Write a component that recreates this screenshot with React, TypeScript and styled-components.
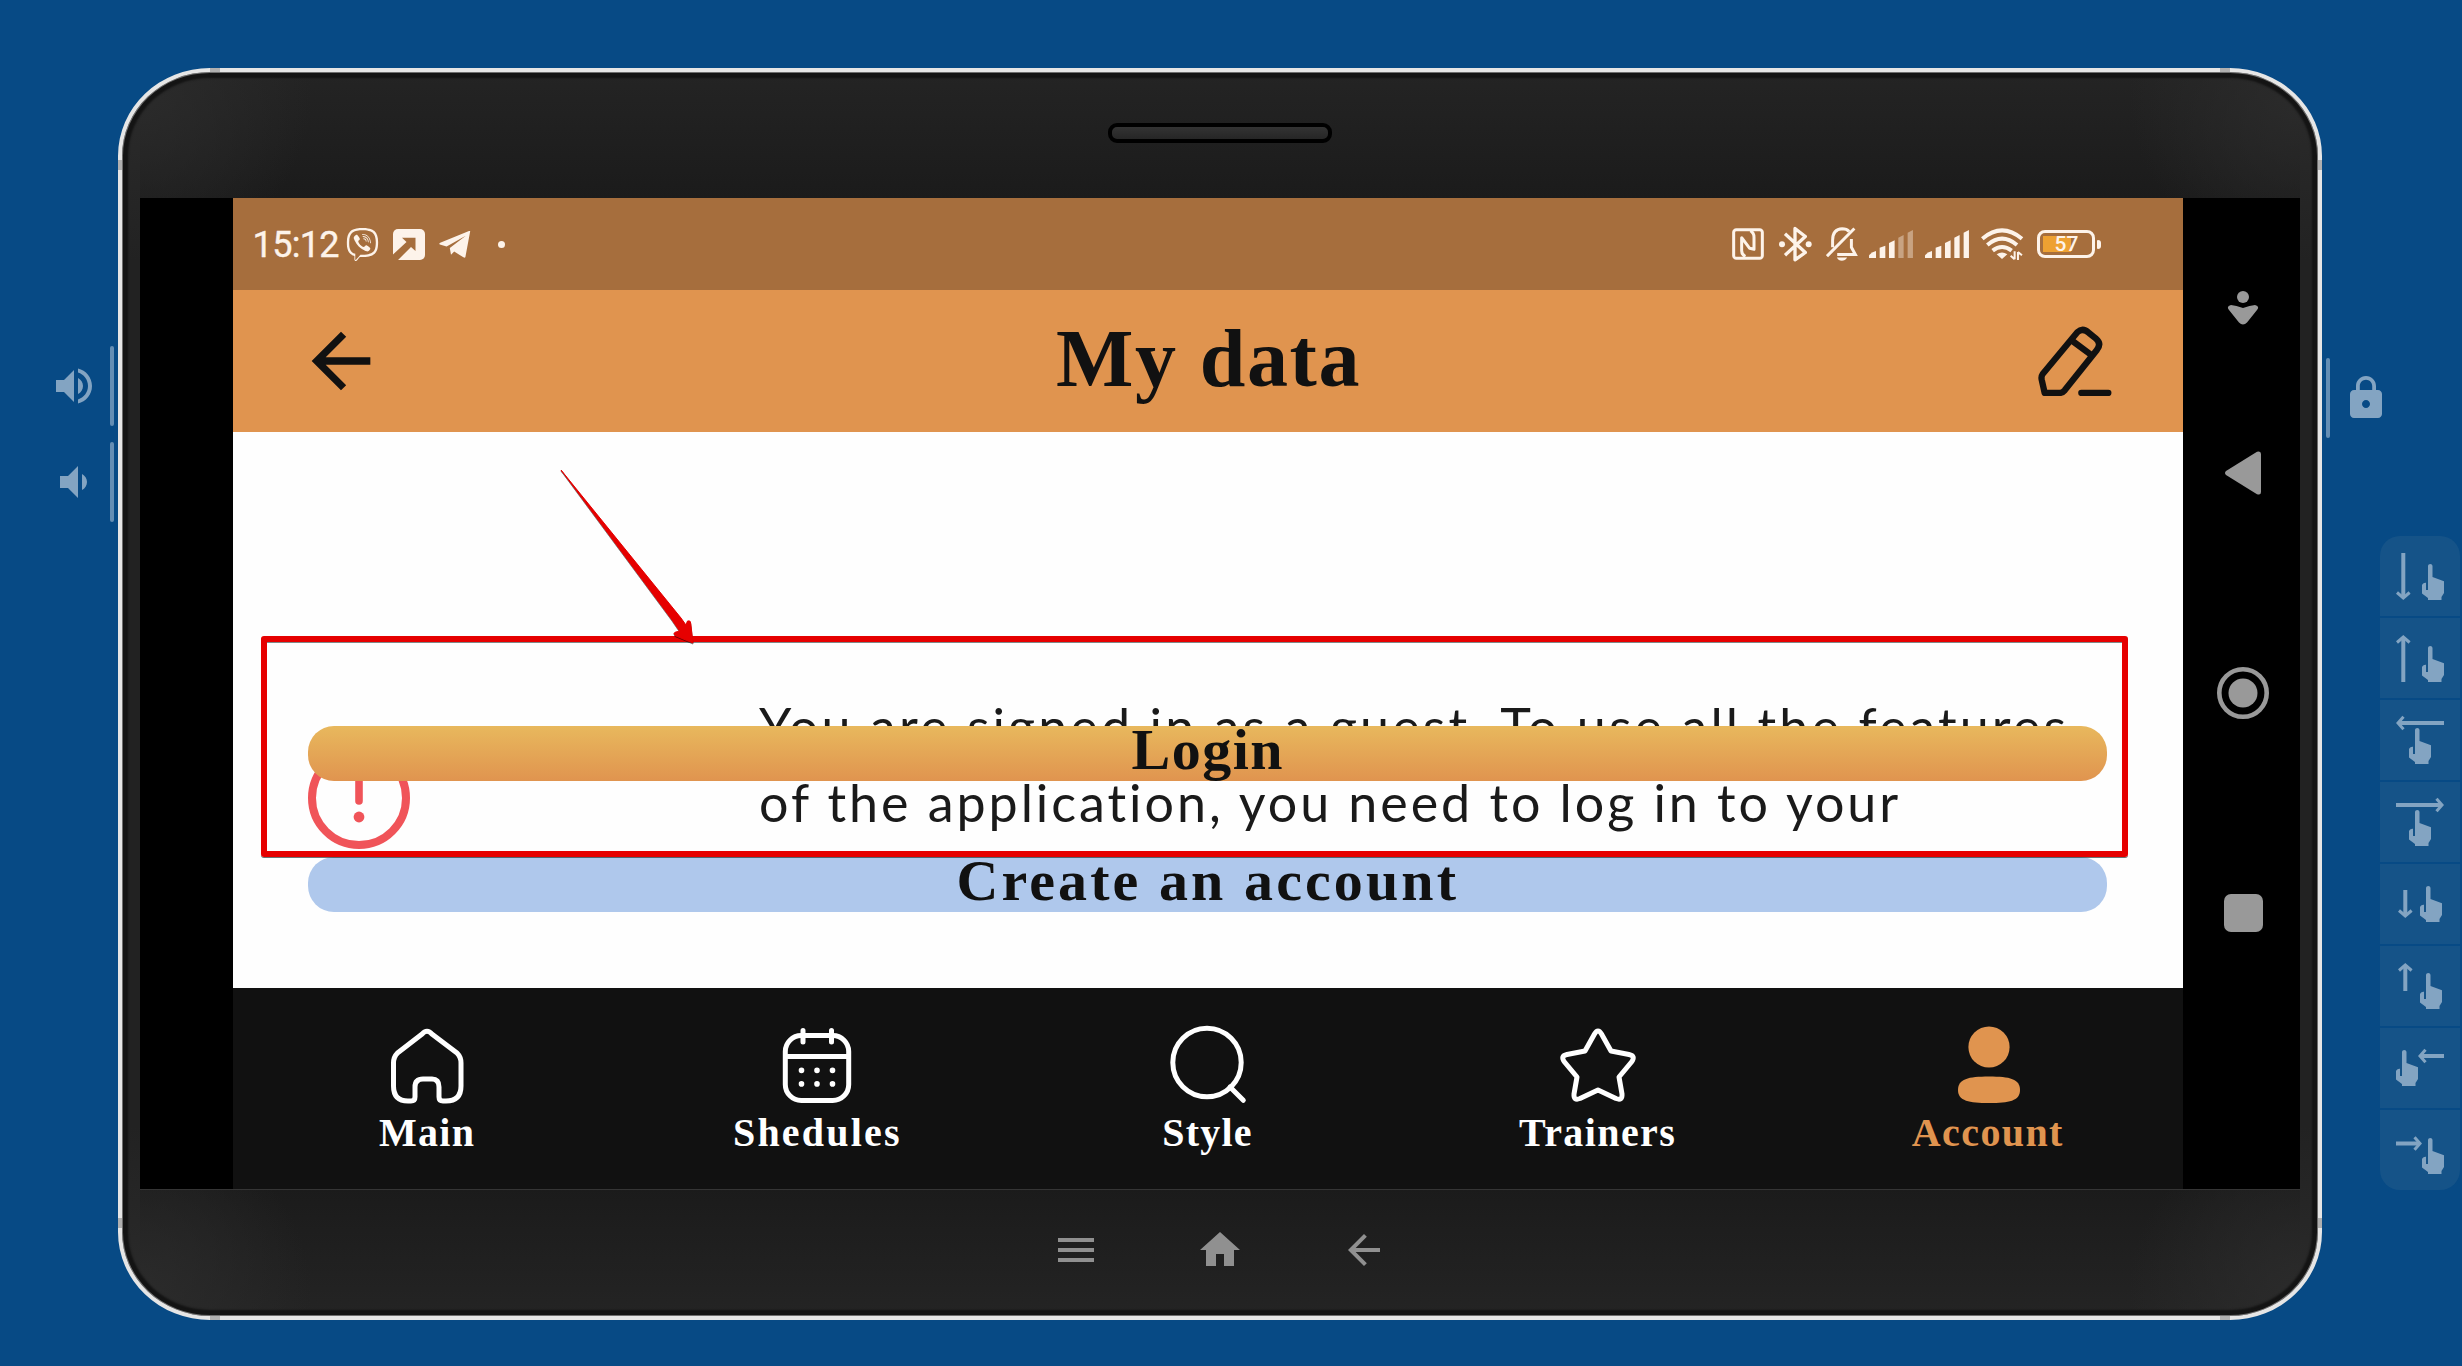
import React from 'react';
import styled, { createGlobalStyle } from 'styled-components';
import { FaViber, FaTelegramPlane } from 'react-icons/fa';

const GlobalStyle = createGlobalStyle`
  * { box-sizing: border-box; }
  body { margin: 0; background: #074a85; overflow: hidden; }
`;

const serif = `"Liberation Serif", "Times New Roman", serif`;

const Stage = styled.main`
  position: relative;
  display: flex;
  width: 2462px;
  height: 1366px;
  background: #074a85;
  overflow: hidden;
`;

const LeftKeys = styled.aside`
  width: 118px;
  padding: 346px 4px 0 50px;
  display: flex;
  flex-direction: column;
  gap: 16px;
`;

const SideKey = styled.div`
  display: flex;
  justify-content: space-between;
  height: 80px;
  svg { display: block; margin-top: 16px; fill: #83a4c2; }
`;

const KeyBar = styled.span`
  width: 4px;
  height: 80px;
  border-radius: 2px;
  background: #648eb4;
`;

const Device = styled.section`
  position: relative;
  width: 2204px;
  height: 1252px;
  margin-top: 68px;
  border: 4px solid #e6e6e6;
  border-radius: 92px / 88px;
  display: flex;
  flex-direction: column;
  align-items: center;
  background:
    radial-gradient(circle at 20px 20px, rgba(44, 44, 44, 0.9), transparent 170px),
    radial-gradient(circle at 2176px 20px, rgba(44, 44, 44, 0.9), transparent 170px),
    radial-gradient(circle at 20px 1224px, rgba(44, 44, 44, 0.9), transparent 170px),
    radial-gradient(circle at 2176px 1224px, rgba(44, 44, 44, 0.9), transparent 170px),
    linear-gradient(90deg, #222 18px, transparent 18px, transparent 2178px, #222 2178px),
    linear-gradient(#242424, #1b1b1b 126px, #1b1b1b 1117px, #242424);
  box-shadow: inset 0 0 0 1px #6e6e6e, inset 0 0 2px 6px #141414;
`;

const Tick = styled.i<{ $x: number; $y: number; $v?: boolean }>`
  position: absolute;
  left: ${(p) => p.$x}px;
  top: ${(p) => p.$y}px;
  width: ${(p) => (p.$v ? 4 : 10)}px;
  height: ${(p) => (p.$v ? 10 : 4)}px;
  background: #b0b0b0;
`;

const Brow = styled.div`
  height: 126px;
  padding-top: 51px;
`;

const Speaker = styled.div`
  width: 224px;
  height: 20px;
  border: 4px solid #000;
  border-radius: 9px;
  background: linear-gradient(#333, #262626);
`;

const Screen = styled.div`
  display: flex;
  width: 2160px;
  height: 992px;
  padding-left: 92.6px;
  background: #000;
  border-bottom: 1px solid #353535;
`;

const AppView = styled.div`
  width: 1950.8px;
  display: flex;
  flex-direction: column;
  background: #fefefe;
`;

const StatusBar = styled.div`
  display: flex;
  height: 91.5px;
  padding: 1px 82px 0 20px;
  align-items: center;
  background: #a66e3d;
  color: #fdf3ea;
  svg { display: block; flex: none; }
`;

const Clock = styled.span`
  width: 93.500px;
  font: 400 36px/40px Roboto, sans-serif;
  letter-spacing: -0.7px;
  -webkit-text-stroke: 0.4px #fdf3ea;
  padding-top: 2px;
`;

const Cluster = styled.div<{ $gap: number }>`
  display: flex;
  align-items: center;
  gap: ${(p) => p.$gap}px;
`;

const Spacer = styled.span`
  flex: 1;
`;

const Dot = styled.i`
  width: 7px;
  height: 7px;
  margin-left: 13px;
  border-radius: 50%;
  background: #fdf3ea;
`;

const NfcIcon = styled.svg`
  margin-right: 3.300px;
`;

const BluetoothIcon = styled.svg`
  margin-right: 2.300px;
`;

const Battery = styled.div`
  display: flex;
  align-items: center;
  margin-left: 2px;
`;

const Cell = styled.div`
  display: flex;
  width: 58px;
  height: 28px;
  border: 3px solid #fdf3ea;
  border-radius: 8px;
  align-items: center;
  justify-content: center;
  background: linear-gradient(90deg, #eea132 28px, transparent 28px) 3px 3px / 46px 16px no-repeat;
  font: 500 21px/22px Roboto, sans-serif;
`;

const BatteryTip = styled.i`
  width: 4px;
  height: 9px;
  margin-left: 2px;
  border-radius: 1px 3px 3px 1px;
  background: #fdf3ea;
`;

const Header = styled.header`
  display: flex;
  justify-content: space-between;
  align-items: center;
  height: 142px;
  padding: 0 71px 0 64px;
  background: #e0944f;
  svg { display: block; fill: #111; }
`;

const Title = styled.h1`
  margin: 0 0 4px -6px;
  font: bold 82px/100px ${serif};
  letter-spacing: 1.6px;
  color: #111;
`;

const Content = styled.section`
  height: 556px;
  padding: 255px 76px 0 75.5px;
  display: flex;
  flex-direction: column;
`;

const Notice = styled.div`
  display: flex;
  height: 152px;
  flex: none;
`;

const AlertIcon = styled.svg`
  flex: none;
  width: 102px;
  height: 102px;
  margin: 60px 349px 0 0;
`;

const Message = styled.p`
  margin: 1px 0 0;
  font: 400 52px/76px Lato, sans-serif;
  color: #1a1a1a;
  white-space: nowrap;
`;

const MessageLine = styled.span<{ $spacing: number }>`
  display: block;
  letter-spacing: ${(p) => p.$spacing}px;
`;

const Actions = styled.div`
  position: relative;
  display: flex;
  flex-direction: column;
  gap: 76.5px;
  margin-top: -112.5px;
`;

const ActionButton = styled.button<{ $fill: string; $spacing: number }>`
  height: 54.7px;
  padding: 0 0 7px;
  border: 0;
  border-radius: 26px;
  background: ${(p) => p.$fill};
  color: #111;
  font: bold 58px/46px ${serif};
  letter-spacing: ${(p) => p.$spacing}px;
`;

const TabBar = styled.nav`
  display: flex;
  flex: 1;
  background: #111;
`;

const Tab = styled.div<{ $active?: boolean; $spacing: number }>`
  flex: 1;
  display: flex;
  flex-direction: column;
  align-items: center;
  gap: 9px;
  padding: 38px 1px 0 0;
  font: bold 40px/40px ${serif};
  letter-spacing: ${(p) => p.$spacing}px;
  color: ${(p) => (p.$active ? '#e0944f' : '#fff')};
  svg { display: block; width: 80px; height: 78px; overflow: visible; }
`;

const SystemNav = styled.div`
  display: flex;
  flex-direction: column;
  align-items: center;
  flex: 1;
  padding: 92px 0 0 3px;
  svg { display: block; fill: #999; }
`;

const NavGlyph = styled.svg<{ $top: number }>`
  margin-top: ${(p) => p.$top}px;
`;

const Chin = styled.div`
  display: flex;
  gap: 96px;
  padding-top: 36px;
  svg { display: block; fill: #909090; }
`;

const RightKeys = styled.aside`
  display: flex;
  flex-direction: column;
  align-items: flex-start;
  width: 140px;
  padding: 358px 0 0 4px;
`;

const LockKey = styled(SideKey)`
  gap: 12px;
`;

const Gestures = styled.div`
  display: flex;
  flex-direction: column;
  gap: 2px;
  margin: 98px 0 0 54px;
  border-radius: 20px;
  overflow: hidden;
`;

const Gesture = styled.svg`
  display: block;
  width: 80px;
  height: 80px;
  background: #155388;
  fill: #83a4c2;
`;

const Highlight = styled.div`
  position: absolute;
  left: 261px;
  top: 636px;
  width: 1867px;
  height: 221px;
  border: 6px solid #e60000;
  border-radius: 3px;
  box-shadow: 0 1px 0 rgba(40, 60, 60, 0.7), inset 0 1px 0 rgba(40, 60, 60, 0.6);
`;

const Pointer = styled.svg`
  position: absolute;
  left: 556px;
  top: 466px;
  width: 144px;
  height: 184px;
  filter: drop-shadow(0 1px 0 rgba(0, 0, 0, 0.5));
`;

const BACK = 'M20 11H7.83l5.59-5.59L12 4l-8 8 8 8 1.41-1.41L7.83 13H20v-2z';

const Material = ({ d, size = 48 }: { d: string; size?: number }) => (
  <svg width={size} height={size} viewBox="0 0 24 24"><path d={d} /></svg>
);

const HAND =
  'M6 2.3C6-.7 10.5-.7 10.5 2.3V13L22 17.2V29L19.5 33V36H6V34L0 29.5V21C1 19 3 18.4 4 18.8V26H6Z';

type GestureSpec = { hand: [number, number]; from: [number, number]; to: [number, number] };

const gestures: GestureSpec[] = [
  { hand: [42, 28], from: [23.3, 17], to: [23.3, 64] },
  { hand: [42, 28], from: [23.3, 64], to: [23.3, 17] },
  { hand: [29, 28], from: [64, 23], to: [16, 23] },
  { hand: [29, 28], from: [16, 23], to: [64, 23] },
  { hand: [40, 22], from: [25.3, 26], to: [25.3, 54] },
  { hand: [40, 27], from: [25.3, 45], to: [25.3, 17] },
  { hand: [16, 22], from: [64, 28], to: [38, 28] },
  { hand: [42, 28], from: [16, 33.5], to: [42, 33.5] },
];

const GestureIcon = ({ hand, from, to }: GestureSpec) => {
  const length = Math.hypot(to[0] - from[0], to[1] - from[1]);
  const angle = (Math.atan2(to[1] - from[1], to[0] - from[0]) * 180) / Math.PI;
  return (
    <Gesture viewBox="0 0 80 80">
      <path d={HAND} transform={`translate(${hand[0]} ${hand[1]})`} />
      <g transform={`translate(${from[0]} ${from[1]}) rotate(${angle})`} fill="none" stroke="#83a4c2">
        <path d={`M0 0H${length - 2}`} strokeWidth="4" />
        <path d={`M${length - 7.5} -6.3L${length - 2} 0L${length - 7.5} 6.3`} strokeWidth="3" />
      </g>
    </Gesture>
  );
};

const signalBars = [
  'M0 85V76Q8 66 21 63V85Z',
  'M32 85V53L49 47V85Z',
  'M60 85V39L77 31V85Z',
  'M88 85V23L104 15V85Z',
  'M116 85V8L132 0V85Z',
];

const Signal = ({ level }: { level: number }) => (
  <svg width="44.3" height="28.3" viewBox="0 0 133 85">
    {signalBars.map((d, i) => (
      <path key={d} d={d} fill="#fdf3ea" opacity={i < level ? 1 : 0.4} />
    ))}
  </svg>
);

const tabs = [
  {
    label: 'Main',
    spacing: 1.3,
    icon: (
      <path
        d="M34.8 8.3Q40 2.2 45.2 8.3L70 27Q74 31 74 37V60Q74 75 59 75H56Q52 75 52 71V61Q52 53 45 53H36Q28 53 28 61V71Q28 75 24 75H21Q6.5 75 6.5 60V37Q6.5 31 10.5 27Z"
        fill="none" stroke="#fff" strokeWidth="5" strokeLinejoin="round"
      />
    ),
  },
  {
    label: 'Shedules',
    spacing: 2.2,
    icon: (
      <g fill="none" stroke="#fff" strokeWidth="5" strokeLinecap="round">
        <rect x="8.3" y="9.5" width="63.4" height="65" rx="16" />
        <path d="M9 30.5H71M26 4.5V16M54.5 4.5V16" />
        <path d="M24.5 44.3v.2M40 44.3v.2M55.5 44.3v.2M24.5 57.7v.2M40 57.7v.2M55.5 57.7v.2" strokeWidth="5.6" />
      </g>
    ),
  },
  {
    label: 'Style',
    spacing: 1.2,
    icon: (
      <g fill="none" stroke="#fff" strokeWidth="5" strokeLinecap="round">
        <circle cx="40" cy="36.5" r="34.2" />
        <path d="M63 61L76.3 74.3" />
      </g>
    ),
  },
  {
    label: 'Trainers',
    spacing: 1.4,
    icon: (
      <path
        d="M36.5 8Q40 2 43.5 8L53 25L71 28.5Q78 30 73.5 36L61 51L64 68Q64.5 75 58 72.5L40 64L22 72.5Q15.5 75 16 68L19 51L6.500 36Q2 30 9 28.5L27 25Z"
        fill="none" stroke="#fff" strokeWidth="5" strokeLinejoin="round"
      />
    ),
  },
  {
    label: 'Account',
    spacing: 1.4,
    active: true,
    icon: (
      <g fill="#e0944f">
        <circle cx="41" cy="21" r="20.6" />
        <path d="M10 64C10 53 20 50.5 41 50.5S72 53 72 64S61 77 41 77S10 75 10 64Z" />
      </g>
    ),
  },
];

export default function App() {
  return (
    <Stage>
      <GlobalStyle />
      <LeftKeys>
        <SideKey>
          <Material d="M3 9v6h4l5 5V4L7 9H3zm13.5 3c0-1.77-1.02-3.29-2.5-4.03v8.05c1.48-.73 2.5-2.25 2.5-4.02zM14 3.23v2.06c2.89.86 5 3.54 5 6.71s-2.11 5.85-5 6.71v2.06c4.01-.91 7-4.49 7-8.77s-2.99-7.86-7-8.77z" />
          <KeyBar />
        </SideKey>
        <SideKey>
          <Material d="M18.5 12c0-1.77-1.02-3.29-2.5-4.03v8.05c1.48-.73 2.5-2.25 2.5-4.02zM5 9v6h4l5 5V4L9 9H5z" />
          <KeyBar />
        </SideKey>
      </LeftKeys>

      <Device>
        <Tick $x={88} $y={-4} />
        <Tick $x={2098} $y={-4} />
        <Tick $x={88} $y={1244} />
        <Tick $x={2098} $y={1244} />
        <Tick $v $x={-4} $y={88} />
        <Tick $v $x={2196} $y={88} />
        <Tick $v $x={-4} $y={1146} />
        <Tick $v $x={2196} $y={1146} />
        <Brow><Speaker /></Brow>
        <Screen>
          <AppView>
            <StatusBar>
              <Clock>15:12</Clock>
              <Cluster $gap={14}>
                <FaViber size={33} />
                <svg width="32" height="31" viewBox="0 0 32 31">
                  <rect width="32" height="31" rx="5" fill="#fdf3ea" />
                  <path d="M9 8.7H22.5V22L18 18 5 31H0V25.5L13.5 13Z" fill="#a66e3d" />
                </svg>
                <svg width="32" height="27" viewBox="0 0 80 80" preserveAspectRatio="none">
                  <path d="M78 1L66 77Q65 81 61 78L38 61L30 70L27 50L67 14L19 46L2 40Q-1 38 3 35L75 0Q78-1 78 1Z" fill="#fdf3ea" />
                </svg>
                <Dot />
              </Cluster>
              <Spacer />
              <Cluster $gap={11.7}>
                <NfcIcon width="32" height="32" viewBox="153 144 96 96" fill="none" stroke="#fdf3ea" strokeWidth="9">
                  <rect x="158" y="149" width="86" height="86" rx="8" />
                  <path d="M193 230Q182 224 182 212V173L206 205L219 208V172Q219 158 208 152" strokeWidth="9" strokeLinejoin="round" />
                </NfcIcon>
                <BluetoothIcon width="33" height="36" viewBox="293 137 99 107" fill="none" stroke="#fdf3ea" strokeWidth="10">
                  <path d="M311 160L372 216L341 238V144L372 168L311 224" strokeLinejoin="round" />
                  <circle cx="302" cy="191" r="9" fill="#fdf3ea" stroke="none" />
                  <circle cx="382" cy="191" r="9" fill="#fdf3ea" stroke="none" />
                </BluetoothIcon>
                <svg width="32" height="34" viewBox="434 142 97 102" fill="none" stroke="#fdf3ea" strokeWidth="9">
                  <path d="M437 230L520 146M454 203V182Q454 148 483 147Q497 147 504 155M468 225H523L511 203V178" />
                  <path d="M467 234H498Q492 244 482 244T467 234Z" fill="#fdf3ea" stroke="none" />
                </svg>
                <Signal level={3} />
                <Signal level={5} />
                <svg width="42.3" height="32" viewBox="903 146 127 96" fill="none" stroke="#fdf3ea" strokeWidth="12">
                  <path d="M907 178Q966 128 1026 178M922 197Q966 159 1011 197M938 214Q966 192 995 214" />
                  <path d="M950 225Q966 214 982 225L966 239Z" fill="#fdf3ea" stroke="none" />
                  <path d="M1004 216V240M1004 240L992 229M1014 242V218M1014 218L1026 228" strokeWidth="6" />
                </svg>
                <Battery>
                  <Cell>57</Cell>
                  <BatteryTip />
                </Battery>
              </Cluster>
            </StatusBar>
            <Header>
              <Material d={BACK} size={88} />
              <Title>My data</Title>
              <svg width="74" height="71.3" viewBox="1076 430 222 214">
                <g fill="none" stroke="#111" strokeWidth="19" strokeLinejoin="round" strokeLinecap="round">
                  <path d="M1096 634H1141Q1149 634 1156 626L1252 506Q1268 486 1250 471L1229 454Q1210 436 1194 452L1090 577Q1085 584 1087 594Z" />
                  <path d="M1182 480L1233 518M1206 634H1287" />
                </g>
              </svg>
            </Header>
            <Content>
              <Notice>
                <AlertIcon viewBox="0 0 102 102">
                  <circle cx="51" cy="51" r="47" fill="none" stroke="#f05459" strokeWidth="8" />
                  <path d="M51 26V54" stroke="#f05459" strokeWidth="7.6" strokeLinecap="round" />
                  <circle cx="51" cy="70" r="5.4" fill="#f05459" />
                </AlertIcon>
                <Message>
                  <MessageLine $spacing={3.1}>You are signed in as a guest. To use all the features</MessageLine>
                  <MessageLine $spacing={2.95}>of the application, you need to log in to your</MessageLine>
                </Message>
              </Notice>
              <Actions>
                <ActionButton $fill="linear-gradient(#e8b85d, #e0944f)" $spacing={1.5}>Login</ActionButton>
                <ActionButton $fill="#afc8ec" $spacing={3.1}>Create an account</ActionButton>
              </Actions>
            </Content>
            <TabBar>
              {tabs.map((tab) => (
                <Tab key={tab.label} $active={tab.active} $spacing={tab.spacing}>
                  <svg viewBox="0 0 80 78">{tab.icon}</svg>
                  {tab.label}
                </Tab>
              ))}
            </TabBar>
          </AppView>
          <SystemNav>
            <svg width="32" height="36" viewBox="0 0 32 36">
              <circle cx="16" cy="7" r="6" />
              <path d="M4 15Q9 15.500 16 18Q23 15.500 28 15Q33 16 30 20L20 32.500Q16 36.500 12 32.500L2 20Q-1 16 4 15Z" />
            </svg>
            <NavGlyph $top={125} width="36" height="44" viewBox="0 0 36 44">
              <path d="M1 20L32 .8Q36-.5 36 3V41Q36 44.500 32 43.200L1 24Q-1 22 1 20Z" />
            </NavGlyph>
            <NavGlyph $top={171} width="54" height="54" viewBox="0 0 54 54">
              <circle cx="27" cy="27" r="23.7" fill="none" stroke="#999" strokeWidth="4.6" />
              <circle cx="27" cy="27" r="14.5" />
            </NavGlyph>
            <NavGlyph $top={174} width="39" height="38" viewBox="0 0 39 38">
              <rect width="39" height="38" rx="7" />
            </NavGlyph>
          </SystemNav>
        </Screen>
        <Chin>
          <Material d="M3 18h18v-2H3v2zm0-5h18v-2H3v2zm0-7v2h18V6H3z" />
          <Material d="M10 20v-6h4v6h5v-8h3L12 3 2 12h3v8z" />
          <Material d={BACK} />
        </Chin>
      </Device>

      <RightKeys>
        <LockKey>
          <KeyBar />
          <Material d="M18 8h-1V6c0-2.76-2.24-5-5-5S7 3.24 7 6v2H6c-1.1 0-2 .9-2 2v10c0 1.1.9 2 2 2h12c1.1 0 2-.9 2-2V10c0-1.1-.9-2-2-2zm-6 9c-1.1 0-2-.9-2-2s.9-2 2-2 2 .9 2 2-.9 2-2 2zm3.1-9H8.9V6c0-1.71 1.39-3.1 3.1-3.1 1.71 0 3.1 1.39 3.1 3.1v2z" />
        </LockKey>
        <Gestures>
          {gestures.map((g, i) => <GestureIcon key={i} {...g} />)}
        </Gestures>
      </RightKeys>

      <Highlight />
      <Pointer viewBox="556 466 144 184">
        <path d="M561 470L681 618L686 625L687.5 621Q690.500 620 690.700 623L693 643L675 635.500Q673 633 675 632.300L679.500 631L672 620Z" fill="#e60000" stroke="#e60000" strokeWidth="1" />
      </Pointer>
    </Stage>
  );
}
